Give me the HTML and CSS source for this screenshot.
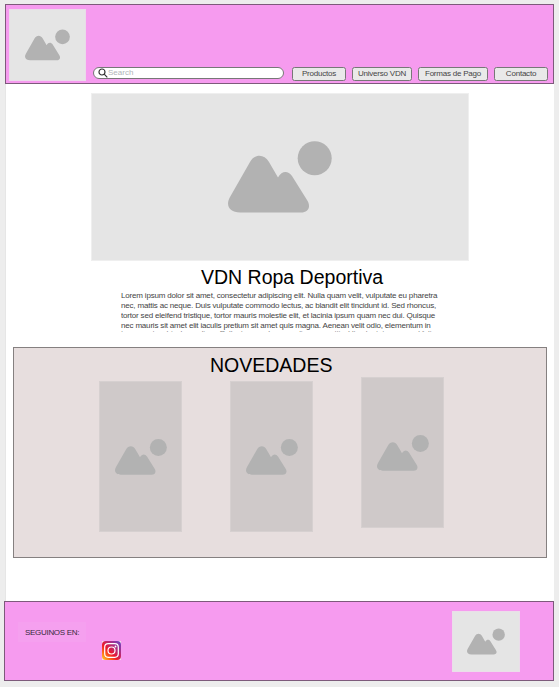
FILE: index.html
```html
<!DOCTYPE html>
<html lang="es">
<head>
<meta charset="utf-8">
<title>VDN Ropa Deportiva</title>
<link rel="stylesheet" href="styles.css">
</head>
<body>
<svg class="defs" aria-hidden="true">
  <symbol id="picture" viewBox="0 0 104 72">
    <path d="M22 21C27 12.500 36 12.500 41 21L50 36.500C54 29.500 60 29.500 64 35L79 59C83.500 66 80 71.500 73 71.500H12C2 71.500-3 65 2 56Z"/>
    <circle cx="86.700" cy="17.200" r="17"/>
  </symbol>
</svg>
<div class="page">
  <header class="header">
    <div class="placeholder logo"><svg><use href="#picture"/></svg></div>
    <div class="search">
      <svg viewBox="0 0 10 10"><circle cx="4" cy="4" r="3"/><path d="M6.200 6.200L9.300 9.300"/></svg>
      <span>Search</span>
    </div>
    <nav class="nav">
      <a class="n1"><span>Productos</span></a>
      <a class="n2"><span>Universo VDN</span></a>
      <a class="n3"><span>Formas de Pago</span></a>
      <a class="n4"><span>Contacto</span></a>
    </nav>
  </header>
  <main>
    <div class="placeholder hero"><svg><use href="#picture"/></svg></div>
    <h1>VDN Ropa Deportiva</h1>
    <p class="intro">
      <span class="l1">Lorem ipsum dolor sit amet, consectetur adipiscing elit. Nulla quam velit, vulputate eu pharetra</span>
      <span class="l2">nec, mattis ac neque. Duis vulputate commodo lectus, ac blandit elit tincidunt id. Sed rhoncus,</span>
      <span class="l3">tortor sed eleifend tristique, tortor mauris molestie elit, et lacinia ipsum quam nec dui. Quisque</span>
      <span class="l4">nec mauris sit amet elit iaculis pretium sit amet quis magna. Aenean velit odio, elementum in</span>
      <span class="l5">tempus ut, vehicula eu diam. Pellentesque rhoncus aliquam mattis. Ut vulputate eros sed felis</span>
    </p>
    <section class="news">
      <h2>NOVEDADES</h2>
      <div class="cards">
        <div class="placeholder card"><svg><use href="#picture"/></svg></div>
        <div class="placeholder card"><svg><use href="#picture"/></svg></div>
        <div class="placeholder card raised"><svg><use href="#picture"/></svg></div>
      </div>
    </section>
  </main>
  <footer class="footer">
    <div class="follow">SEGUINOS EN:</div>
    <svg class="instagram" viewBox="0 0 19 19">
      <defs>
        <linearGradient id="sunset" x1="0" y1="1" x2="1" y2="0">
          <stop offset="0" stop-color="#ffd52c"/><stop offset=".23" stop-color="#ff6b17"/>
          <stop offset=".42" stop-color="#ee172b"/><stop offset=".65" stop-color="#b62b78"/>
          <stop offset="1" stop-color="#6545cc"/>
        </linearGradient>
      </defs>
      <rect class="tile" width="19" height="19"/>
      <rect width="19" height="19" rx="4" fill="url(#sunset)"/>
      <rect class="line" x="2.700" y="2.700" width="13.600" height="13.600" rx="3.500"/>
      <circle class="line" cx="9.500" cy="9.500" r="3.500"/>
      <circle class="dot" cx="13.500" cy="5.500" r=".9"/>
    </svg>
    <div class="placeholder badge"><svg><use href="#picture"/></svg></div>
  </footer>
</div>
</body>
</html>
```

FILE: styles.css
```css
* { box-sizing: border-box; }
body {
  margin: 0;
  height: 687px;
  overflow: hidden;
  background: #ededed;
  font-family: "Liberation Sans", Arial, sans-serif;
}
.defs { position: absolute; width: 0; height: 0; }
.page { width: 549px; height: 677px; margin: 4px 0 0 5px; background: #fff; border-left: 1px solid #e6e6e6; }
.placeholder { display: flex; align-items: center; justify-content: center; background: #e5e5e5; }
.placeholder svg { fill: #b2b2b2; }

.header {
  display: flex;
  width: 549px;
  height: 80px;
  margin-left: -1px;
  padding: 4px 0 0 3px;
  background: #f69bef;
  border: 1px solid #7d5a7b;
}
.logo { width: 77px; height: 72px; border: 1px solid #eadbe9; }
.logo svg { width: 45px; height: 32px; }
.search {
  display: flex;
  align-items: center;
  width: 191px;
  height: 12px;
  margin: 58px 0 0 7px;
  padding-left: 4px;
  background: #fff;
  border: 1px solid #777;
  border-radius: 6px;
  color: #b0b4b8;
  font-size: 8px;
  line-height: 10px;
}
.search svg { width: 10px; height: 10px; margin-right: 0; fill: none; stroke: #333; stroke-width: 1.2; }
.search span { margin-top: -1px; }
.nav { display: flex; gap: 6px; margin: 58px 0 0 7px; }
.nav a {
  height: 14px;
  background: #e9e9e9;
  border: 1px solid #777;
  border-radius: 2.5px;
  color: #444;
  font-size: 8px;
  line-height: 11px;
  letter-spacing: -.22px;
  text-align: center;
  white-space: nowrap;
}
.nav .n1 { width: 54px; margin-left: 1px; }
.n2 { width: 60px; }
.n3 { width: 70px; }
.n4 { width: 54px; }

.hero { width: 378px; height: 168px; margin: 9px 0 0 85px; border: 1px solid #efefef; }
.hero svg { width: 104px; height: 72px; }
h1, h2 { margin: 0; font-weight: 400; color: #000; white-space: nowrap; }
h1 { margin: 4px 0 0 195px; font-size: 19.5px; line-height: 24px; }
.intro {
  height: 43px;
  margin: 0 0 0 115px;
  padding-top: 2px;
  overflow: hidden;
  color: #444;
  font-size: 8px;
  line-height: 10px;
  letter-spacing: -.185px;
}
.intro span { display: block; white-space: nowrap; }
.intro .l5 { margin-top: -2px; color: #888; }
.news {
  width: 534px;
  height: 211px;
  margin: 15px 0 0 7px;
  padding-top: 5px;
  background: #e7dede;
  border: 1px solid #858080;
}
h2 { margin-left: 196px; font-size: 19.5px; line-height: 24px; }
.cards { display: flex; gap: 48px; padding: 4px 0 0 85px; }
.card { width: 83px; height: 151px; background: #cfc9c9; border: 1px solid #d6d0d0; }
.card svg { width: 52px; height: 36px; }
.raised { margin-top: -4px; }

.footer {
  display: flex;
  width: 550px;
  height: 80px;
  margin: 43px 0 0 -2px;
  background: #f69bef;
  border: 1px solid #7d5a7b;
}
.follow {
  width: 68px;
  height: 20px;
  margin: 20px 0 0 13px;
  padding-left: 7px;
  background: #f5a0ef;
  color: #352b3c;
  font-size: 8px;
  line-height: 21px;
  letter-spacing: -.3px;
  white-space: nowrap;
}
.instagram { width: 19px; height: 19px; margin: 39px 0 0 16px; }
.tile { fill: #f4dcea; }
.line { fill: none; stroke: #fff; stroke-width: 1.2; }
.dot { fill: #fff; }
.badge { width: 68px; height: 61px; margin: 9px 0 0 331px; border: 1px solid #ebdeea; }
.badge svg { width: 38px; height: 27px; }
```
